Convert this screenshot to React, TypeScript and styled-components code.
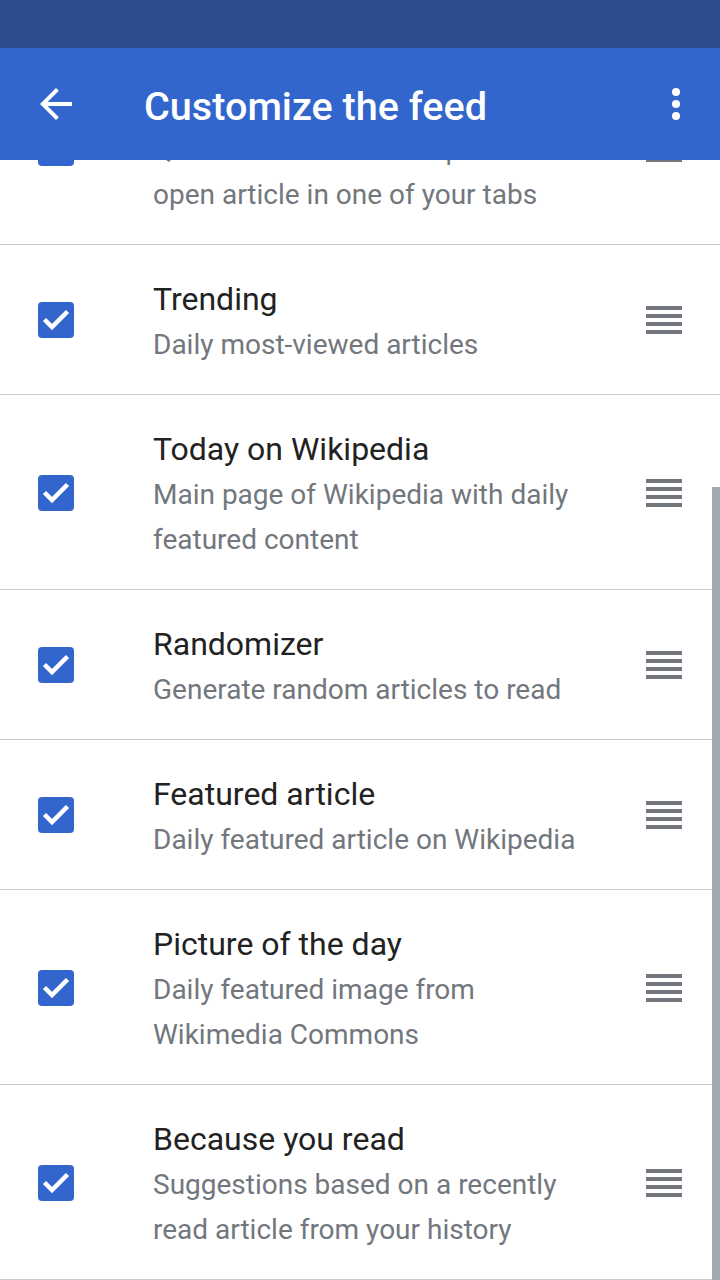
import React, { useLayoutEffect, useRef } from 'react'
import styled, { createGlobalStyle } from 'styled-components'

const GlobalStyle = createGlobalStyle`
    html, body {
        margin: 0;
        padding: 0;
        background: #ffffff;
        font-family: Roboto, "Noto Sans", sans-serif;
    }
`

const Screen = styled.div`
    width: 720px;
    height: 1280px;
    display: flex;
    flex-direction: column;
    overflow: hidden;
    background: #ffffff;
`

const StatusBar = styled.div`
    height: 48px;
    flex: none;
    background: #2b4d8f;
`

const Toolbar = styled.div`
    height: 112px;
    flex: none;
    display: flex;
    align-items: center;
    padding: 0 20px 0 32px;
    background: #3366cc;
    color: #ffffff;
    position: relative;
    z-index: 1;
`

const IconButton = styled.div`
    width: 48px;
    height: 48px;
    display: flex;
    align-items: center;
    justify-content: center;
    flex: none;
`

const Title = styled.h1`
    flex: 1;
    margin: 4px 0 0 64px;
    font-size: 39.6px;
    font-weight: 500;
    letter-spacing: 0;
`

const ListViewport = styled.div`
    flex: 1;
    position: relative;
    overflow: hidden;
`

const Scroller = styled.div`
    position: relative;
    height: 100%;
    overflow: hidden;
`

const ScrollThumb = styled.div`
    position: absolute;
    right: 0;
    top: 327px;
    width: 8px;
    height: 793px;
    background: #a2a9b1;
`

const Row = styled.div`
    display: flex;
    align-items: center;
    padding: 32px 38px 27px 38px;
    border-bottom: 1px solid #c8ccd1;
`

const Checkbox = styled.div`
    width: 36px;
    height: 36px;
    flex: none;
    margin-bottom: 4px;
    border-radius: 4px;
    background: #3366cc;
    display: flex;
    align-items: center;
    justify-content: center;
`

const TextBlock = styled.div`
    flex: 1;
    margin: 0 50px 0 79px;
`

const ItemTitle = styled.div`
    font-size: 32px;
    line-height: 45px;
    color: #222222;
`

const ItemSubtitle = styled.div`
    font-size: 28px;
    line-height: 45px;
    color: #72777d;
`

const Handle = styled.div`
    width: 36px;
    flex: none;
    margin-bottom: 4px;
    display: flex;
    flex-direction: column;
    gap: 4px;
`

const HandleLine = styled.span`
    display: block;
    height: 4px;
    background: #72777d;
`

type Item = { title: string; description: string }

const items: Item[] = [
    { title: 'In the news', description: 'Articles about current events' },
    { title: 'Continue reading', description: 'Quick link back to a suspended open article in one of your tabs' },
    { title: 'Trending', description: 'Daily most-viewed articles' },
    { title: 'Today on Wikipedia', description: 'Main page of Wikipedia with daily featured content' },
    { title: 'Randomizer', description: 'Generate random articles to read' },
    { title: 'Featured article', description: 'Daily featured article on Wikipedia' },
    { title: 'Picture of the day', description: 'Daily featured image from Wikimedia Commons' },
    { title: 'Because you read', description: 'Suggestions based on a recently read article from your history' },
]

const BackIcon = () => (
    <svg width="48" height="48" viewBox="0 0 24 24" fill="#ffffff">
        <path d="M20 11H7.83l5.59-5.59L12 4l-8 8 8 8 1.41-1.41L7.83 13H20v-2z" />
    </svg>
)

const MoreIcon = () => (
    <svg width="48" height="48" viewBox="0 0 24 24" fill="#ffffff">
        <circle cx="12" cy="6" r="2" />
        <circle cx="12" cy="12" r="2" />
        <circle cx="12" cy="18" r="2" />
    </svg>
)

const CheckMark = () => (
    <svg width="36" height="36" viewBox="0 0 36 36">
        <path d="M6.5 17.5L14 25L29.5 9.5" fill="none" stroke="#ffffff" strokeWidth="4.5" />
    </svg>
)

const FeedRow = ({ item, rowRef }: { item: Item; rowRef?: React.Ref<HTMLDivElement> }) => (
    <Row ref={rowRef}>
        <Checkbox>
            <CheckMark />
        </Checkbox>
        <TextBlock>
            <ItemTitle>{item.title}</ItemTitle>
            <ItemSubtitle>{item.description}</ItemSubtitle>
        </TextBlock>
        <Handle>
            <HandleLine />
            <HandleLine />
            <HandleLine />
            <HandleLine />
        </Handle>
    </Row>
)

const App: React.FC = () => {
    const scrollerRef = useRef<HTMLDivElement>(null)
    const trendingRef = useRef<HTMLDivElement>(null)

    // scroll so the "Trending" row sits 85px below the toolbar
    useLayoutEffect(() => {
        if (scrollerRef.current && trendingRef.current) {
            scrollerRef.current.scrollTop = trendingRef.current.offsetTop - 85
        }
    }, [])

    return (
        <Screen>
            <GlobalStyle />
            <StatusBar />
            <Toolbar>
                <IconButton>
                    <BackIcon />
                </IconButton>
                <Title>Customize the feed</Title>
                <IconButton>
                    <MoreIcon />
                </IconButton>
            </Toolbar>
            <ListViewport>
                <Scroller ref={scrollerRef}>
                    {items.map((item) => (
                        <FeedRow
                            key={item.title}
                            item={item}
                            rowRef={item.title === 'Trending' ? trendingRef : undefined}
                        />
                    ))}
                </Scroller>
                <ScrollThumb />
            </ListViewport>
        </Screen>
    )
}

export default App
